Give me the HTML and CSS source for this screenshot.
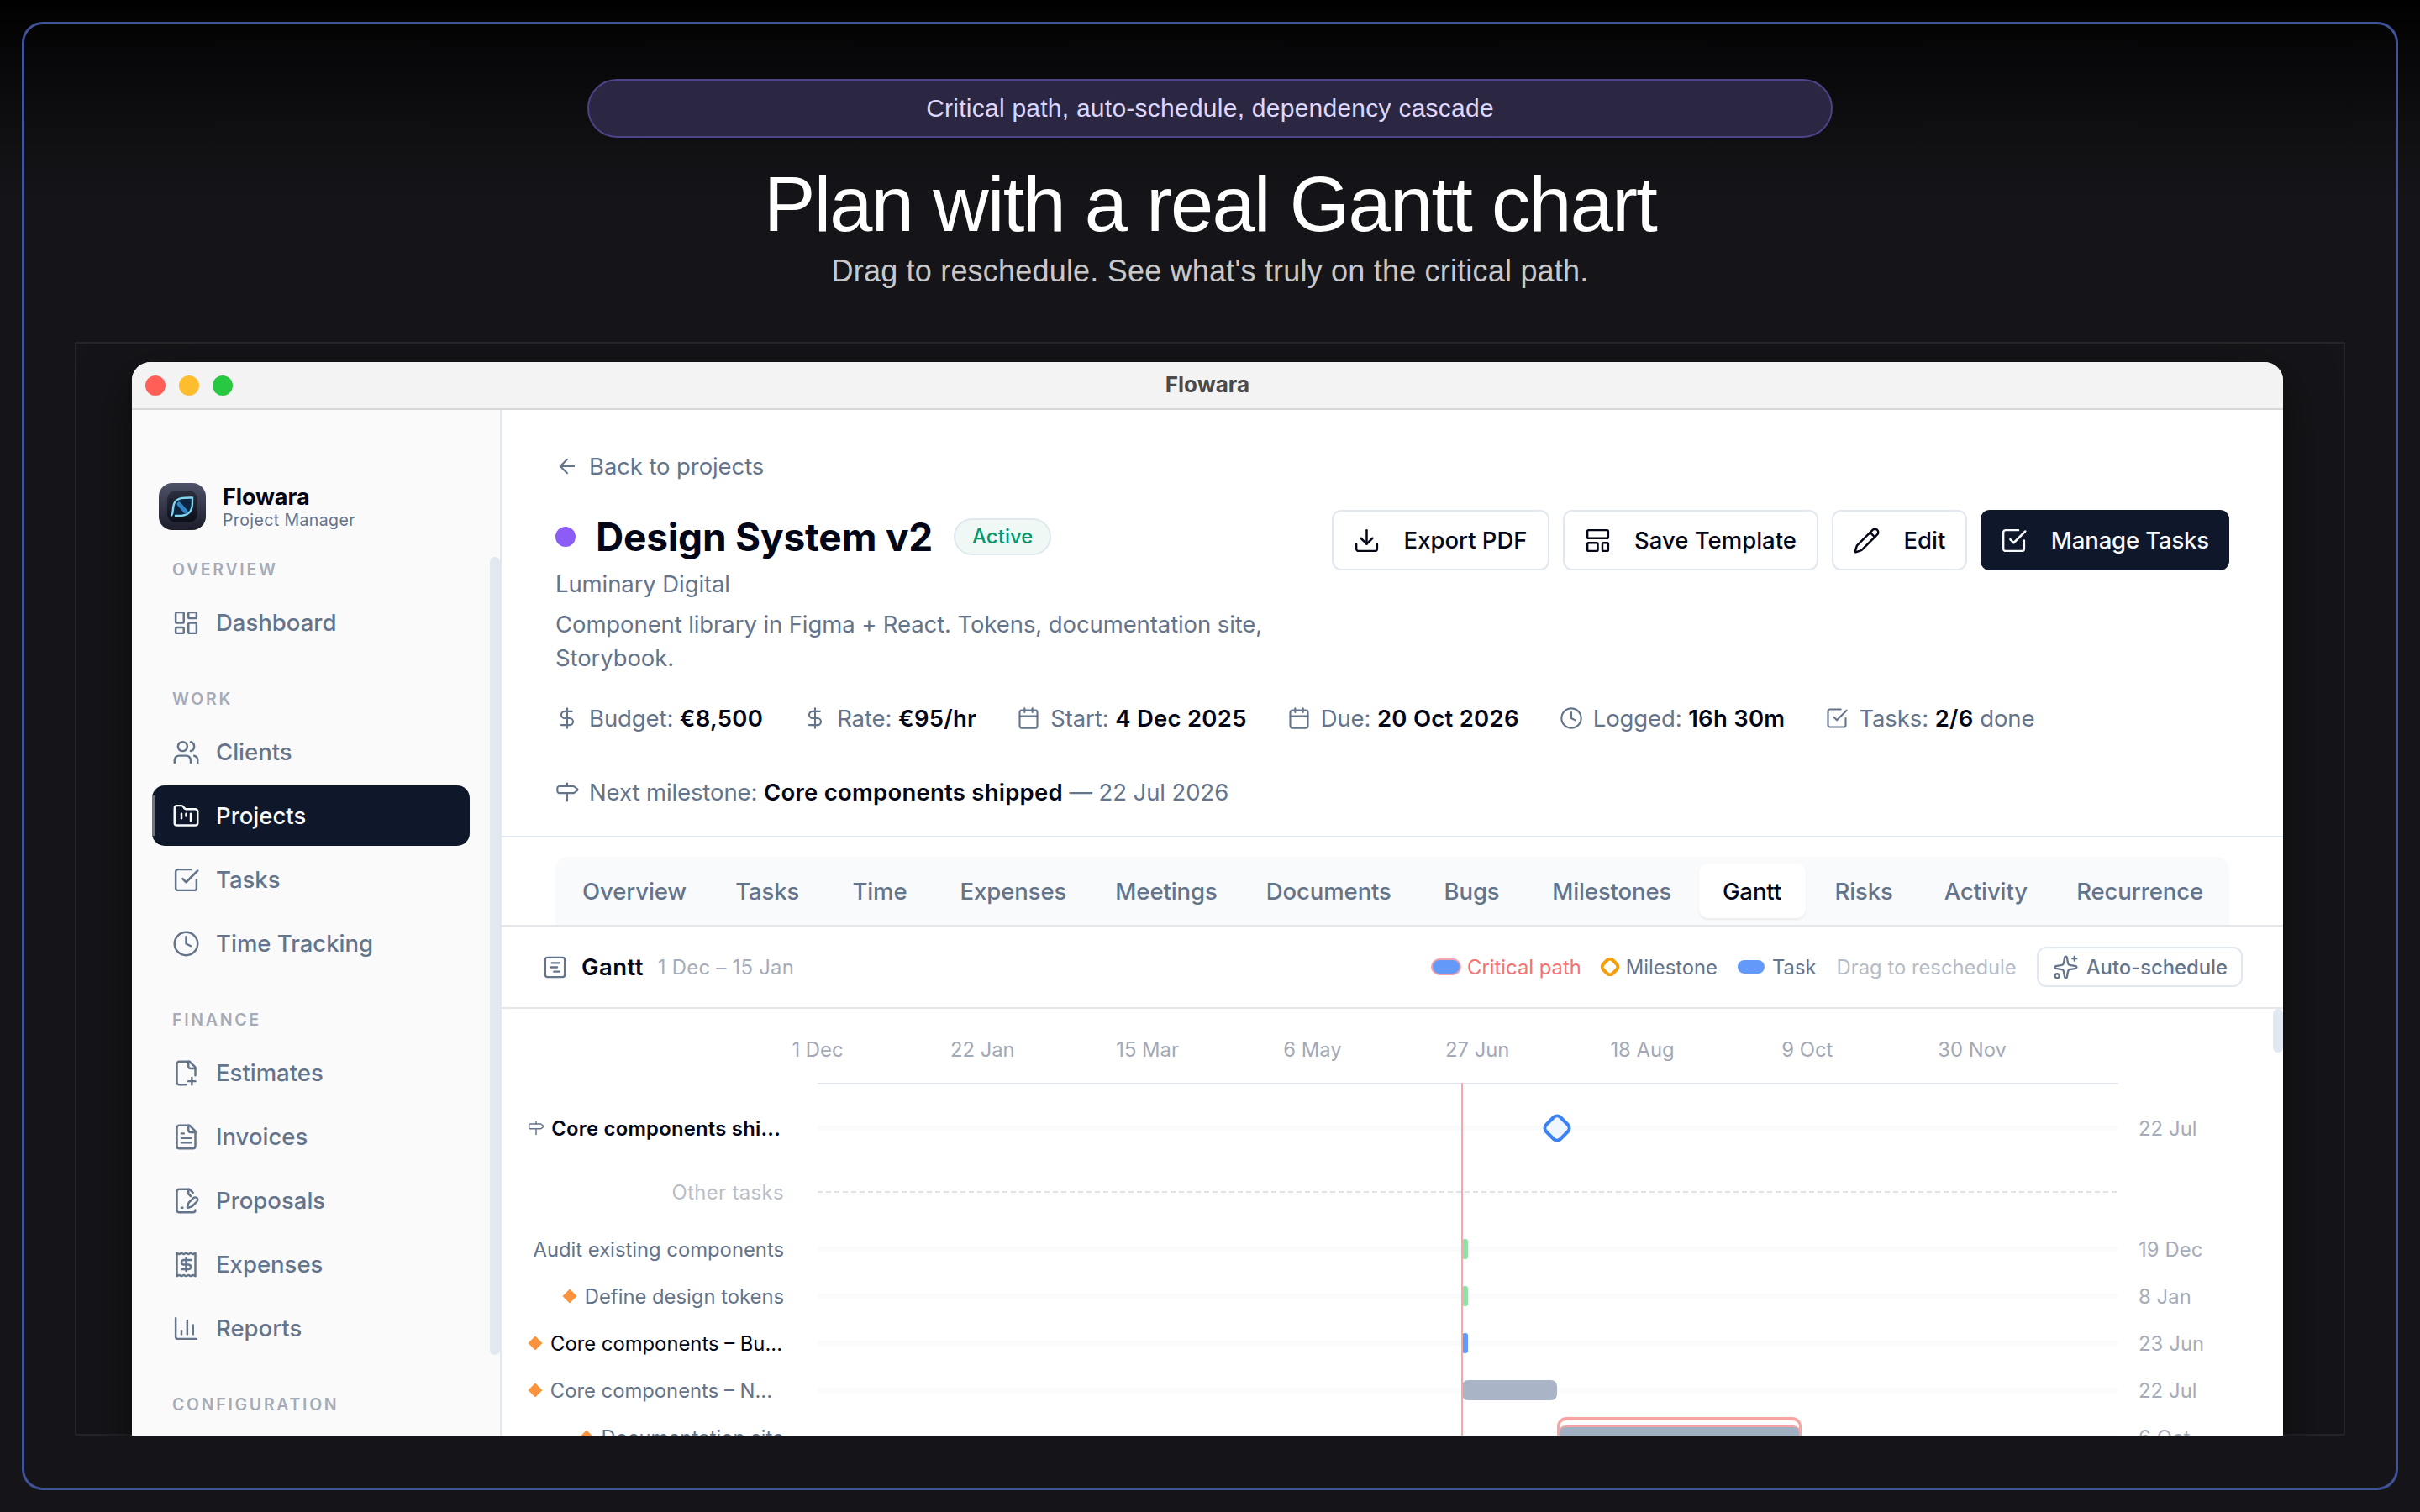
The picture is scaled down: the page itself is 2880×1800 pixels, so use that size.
FILE: index.html
```html
<!doctype html>
<html lang="en">
 <head>
  <meta charset="utf-8">
  <title>Flowara</title>
  <meta name="viewport" content="width=device-width, initial-scale=1">
  <link rel="stylesheet" href="styles.css">
 </head>
 <body>
  <svg class="sprite">
   <symbol id="i-dashboard" viewBox="0 0 24 24"><rect width="7" height="9" x="3" y="3" rx="1"/><rect width="7" height="5" x="14" y="3" rx="1"/><rect width="7" height="9" x="14" y="12" rx="1"/><rect width="7" height="5" x="3" y="16" rx="1"/></symbol>
   <symbol id="i-users" viewBox="0 0 24 24"><path d="M16 21v-2a4 4 0 0 0-4-4H6a4 4 0 0 0-4 4v2"/><circle cx="9" cy="7" r="4"/><path d="M22 21v-2a4 4 0 0 0-3-3.87"/><path d="M16 3.13a4 4 0 0 1 0 7.75"/></symbol>
   <symbol id="i-folder" viewBox="0 0 24 24"><path d="M4 20h16a2 2 0 0 0 2-2V8a2 2 0 0 0-2-2h-7.93a2 2 0 0 1-1.66-.9l-.82-1.2A2 2 0 0 0 7.93 3H4a2 2 0 0 0-2 2v13c0 1.1.9 2 2 2Z"/><path d="M8 10v4"/><path d="M12 10v2"/><path d="M16 10v6"/></symbol>
   <symbol id="i-check" viewBox="0 0 24 24"><path d="m9 11 3 3L22 4"/><path d="M21 12v7a2 2 0 0 1-2 2H5a2 2 0 0 1-2-2V5a2 2 0 0 1 2-2h11"/></symbol>
   <symbol id="i-clock" viewBox="0 0 24 24"><circle cx="12" cy="12" r="10"/><path d="M12 6v6l4 2"/></symbol>
   <symbol id="i-estimate" viewBox="0 0 24 24"><path d="M14 2v4a2 2 0 0 0 2 2h4"/><path d="M20 14V7l-5-5H6a2 2 0 0 0-2 2v16a2 2 0 0 0 2 2h6"/><path d="M14 19h6"/><path d="M17 16v6"/></symbol>
   <symbol id="i-invoice" viewBox="0 0 24 24"><path d="M15 2H6a2 2 0 0 0-2 2v16a2 2 0 0 0 2 2h12a2 2 0 0 0 2-2V7Z"/><path d="M14 2v4a2 2 0 0 0 2 2h4"/><path d="M10 9H8"/><path d="M16 13H8"/><path d="M16 17H8"/></symbol>
   <symbol id="i-proposal" viewBox="0 0 24 24"><path d="m18 5-2.414-2.414A2 2 0 0 0 14.172 2H6a2 2 0 0 0-2 2v16a2 2 0 0 0 2 2h12a2 2 0 0 0 2-2"/><path d="M21.378 12.626a1 1 0 0 0-3.004-3.004l-4.01 4.012a2 2 0 0 0-.506.854l-.837 2.87a.5.5 0 0 0 .62.62l2.87-.837a2 2 0 0 0 .854-.506z"/><path d="M14 2v4l2 2"/><path d="M8 18h1"/></symbol>
   <symbol id="i-receipt" viewBox="0 0 24 24"><path d="M4 2v20l2-1 2 1 2-1 2 1 2-1 2 1 2-1 2 1V2l-2 1-2-1-2 1-2-1-2 1-2-1-2 1Z"/><path d="M16 8h-6a2 2 0 1 0 0 4h4a2 2 0 1 1 0 4H8"/><path d="M12 17.5v-11"/></symbol>
   <symbol id="i-reports" viewBox="0 0 24 24"><path d="M3 3v16a2 2 0 0 0 2 2h16"/><path d="M18 17V9"/><path d="M13 17V5"/><path d="M8 17v-3"/></symbol>
   <symbol id="i-back" viewBox="0 0 24 24"><path d="m12 19-7-7 7-7"/><path d="M19 12H5"/></symbol>
   <symbol id="i-dollar" viewBox="0 0 24 24"><path d="M12 2v20"/><path d="M17 5H9.5a3.5 3.5 0 0 0 0 7h5a3.5 3.5 0 0 1 0 7H6"/></symbol>
   <symbol id="i-calendar" viewBox="0 0 24 24"><path d="M8 2v4"/><path d="M16 2v4"/><rect width="18" height="18" x="3" y="4" rx="2"/><path d="M3 10h18"/></symbol>
   <symbol id="i-signpost" viewBox="0 0 24 24"><path d="M12 13v8"/><path d="M12 3v3"/><path d="M18.2 6a2 2 0 0 1 1.4.6l2.7 2.2a1 1 0 0 1 0 1.4l-2.7 2.2a2 2 0 0 1-1.4.6H4a2 2 0 0 1-2-2V8a2 2 0 0 1 2-2z"/></symbol>
   <symbol id="i-download" viewBox="0 0 24 24"><path d="M21 15v4a2 2 0 0 1-2 2H5a2 2 0 0 1-2-2v-4"/><path d="m7 10 5 5 5-5"/><path d="M12 15V3"/></symbol>
   <symbol id="i-template" viewBox="0 0 24 24"><rect width="18" height="7" x="3" y="3" rx="1"/><rect width="9" height="7" x="3" y="14" rx="1"/><rect width="5" height="7" x="16" y="14" rx="1"/></symbol>
   <symbol id="i-pencil" viewBox="0 0 24 24"><path d="M21.174 6.812a1 1 0 0 0-3.986-3.987L3.842 16.174a2 2 0 0 0-.5.83l-1.321 4.352a.5.5 0 0 0 .623.622l4.353-1.32a2 2 0 0 0 .83-.497z"/><path d="m15 5 4 4"/></symbol>
   <symbol id="i-gantt" viewBox="0 0 24 24"><rect width="18" height="18" x="3" y="3" rx="2"/><path d="M9 8h7"/><path d="M8 12h6"/><path d="M11 16h5"/></symbol>
   <symbol id="i-sparkles" viewBox="0 0 24 24"><path d="M11.017 2.814a1 1 0 0 1 1.966 0l1.051 5.558a2 2 0 0 0 1.594 1.594l5.558 1.051a1 1 0 0 1 0 1.966l-5.558 1.051a2 2 0 0 0-1.594 1.594l-1.051 5.558a1 1 0 0 1-1.966 0l-1.051-5.558a2 2 0 0 0-1.594-1.594l-5.558-1.051a1 1 0 0 1 0-1.966l5.558-1.051a2 2 0 0 0 1.594-1.594z"/><path d="M20 2v4"/><path d="M22 4h-4"/><circle cx="4" cy="20" r="2"/></symbol>
  </svg>

  <main class="poster">
   <div class="pill">Critical path, auto-schedule, dependency cascade</div>
   <h1>Plan with a real Gantt chart</h1>
   <p class="tagline">Drag to reschedule. See what's truly on the critical path.</p>

   <div class="frame">
    <div class="window">
     <header class="titlebar">
      <div class="lights"><i class="red"></i><i class="yellow"></i><i class="green"></i></div>
      <span>Flowara</span>
     </header>
     <div class="app">
      <aside class="sidebar">
       <div class="brand">
        <svg class="logo" viewBox="0 0 56 56">
         <defs>
          <linearGradient id="tile" x1="0" y1="0" x2="0" y2="1"><stop offset="0" stop-color="#4d5268"/><stop offset="1" stop-color="#1c1d2b"/></linearGradient>
          <linearGradient id="inner" x1="0" y1="0" x2="0" y2="1"><stop offset="0" stop-color="#2b2f3f"/><stop offset="1" stop-color="#0c0e18"/></linearGradient>
         </defs>
         <rect width="56" height="56" rx="16" fill="url(#tile)"/>
         <rect x="10" y="9" width="36" height="38" rx="10" fill="url(#inner)"/>
         <path d="M15 38.500C18 36 15.500 29 19 23C23 17 31 17.500 40 17.500C40 25 40.500 31 36 35.500C32 39.500 26 39 20 39" fill="#0c2340" stroke="#7fd6ee" stroke-width="2.400" stroke-linecap="round" stroke-linejoin="round"/>
         <path d="M24 25l8 9" stroke="#2f86c4" stroke-width="5" stroke-linecap="round"/>
        </svg>
        <div class="brand-text"><strong>Flowara</strong><small>Project Manager</small></div>
       </div>
       <nav>
        <h6>Overview</h6>
        <a><svg><use href="#i-dashboard"/></svg>Dashboard</a>
        <h6>Work</h6>
        <a><svg><use href="#i-users"/></svg>Clients</a>
        <a class="active"><svg><use href="#i-folder"/></svg>Projects</a>
        <a><svg><use href="#i-check"/></svg>Tasks</a>
        <a><svg><use href="#i-clock"/></svg>Time Tracking</a>
        <h6>Finance</h6>
        <a><svg><use href="#i-estimate"/></svg>Estimates</a>
        <a><svg><use href="#i-invoice"/></svg>Invoices</a>
        <a><svg><use href="#i-proposal"/></svg>Proposals</a>
        <a><svg><use href="#i-receipt"/></svg>Expenses</a>
        <a><svg><use href="#i-reports"/></svg>Reports</a>
        <h6>Configuration</h6>
       </nav>
       <div class="scrollbar"></div>
      </aside>

      <section class="content">
       <div class="project">
        <a class="back"><svg><use href="#i-back"/></svg>Back to projects</a>
        <div class="project-head">
         <div class="project-info">
          <div class="title-row">
           <i class="dot"></i>
           <h2>Design System v2</h2>
           <span class="badge">Active</span>
          </div>
          <p class="client">Luminary Digital</p>
          <p class="desc">Component library in Figma + React. Tokens, documentation site, Storybook.</p>
         </div>
         <div class="actions">
          <button><svg><use href="#i-download"/></svg>Export PDF</button>
          <button><svg><use href="#i-template"/></svg>Save Template</button>
          <button><svg><use href="#i-pencil"/></svg>Edit</button>
          <button class="primary"><svg><use href="#i-check"/></svg>Manage Tasks</button>
         </div>
        </div>
        <div class="meta">
         <span><svg><use href="#i-dollar"/></svg>Budget: <b>€8,500</b></span>
         <span><svg><use href="#i-dollar"/></svg>Rate: <b>€95/hr</b></span>
         <span><svg><use href="#i-calendar"/></svg>Start: <b>4 Dec 2025</b></span>
         <span><svg><use href="#i-calendar"/></svg>Due: <b>20 Oct 2026</b></span>
         <span><svg><use href="#i-clock"/></svg>Logged: <b>16h 30m</b></span>
         <span><svg><use href="#i-check"/></svg>Tasks: <b>2/6</b> done</span>
         <span><svg><use href="#i-signpost"/></svg>Next milestone: <b>Core components shipped</b> — 22 Jul 2026</span>
        </div>
       </div>

       <div class="tabs-wrap">
        <div class="tabs">
         <a>Overview</a><a>Tasks</a><a>Time</a><a>Expenses</a><a>Meetings</a><a>Documents</a><a>Bugs</a><a>Milestones</a><a class="active">Gantt</a><a>Risks</a><a>Activity</a><a>Recurrence</a>
        </div>
       </div>

       <div class="toolbar">
        <svg><use href="#i-gantt"/></svg>
        <h3>Gantt</h3>
        <span class="range">1 Dec – 15 Jan</span>
        <div class="legend">
         <span class="critical"><i class="swatch"></i>Critical path</span>
         <span><i class="ring"></i>Milestone</span>
         <span><i class="swatch"></i>Task</span>
         <span class="hint">Drag to reschedule</span>
         <button><svg><use href="#i-sparkles"/></svg>Auto-schedule</button>
        </div>
       </div>

       <div class="gantt">
        <div class="axis">
         <span>1 Dec</span><span>22 Jan</span><span>15 Mar</span><span>6 May</span><span>27 Jun</span><span>18 Aug</span><span>9 Oct</span><span>30 Nov</span>
        </div>
        <div class="rows">
         <div class="row milestone">
          <div class="label"><svg><use href="#i-signpost"/></svg><b>Core components shi...</b></div>
          <div class="track"><i class="diamond" style="left: 56.85%"></i></div>
          <time>22 Jul</time>
         </div>
         <div class="row other">
          <div class="label">Other tasks</div>
          <div class="dashes"></div>
         </div>
         <div class="row">
          <div class="label">Audit existing components</div>
          <div class="track"><i class="bar done" style="left: 49.55%; width: 7px"></i></div>
          <time>19 Dec</time>
         </div>
         <div class="row">
          <div class="label"><i class="dep"></i>Define design tokens</div>
          <div class="track"><i class="bar done" style="left: 49.55%; width: 7px"></i></div>
          <time>8 Jan</time>
         </div>
         <div class="row current">
          <div class="label"><i class="dep"></i>Core components – Bu...</div>
          <div class="track"><i class="bar doing" style="left: 49.55%; width: 7px"></i></div>
          <time>23 Jun</time>
         </div>
         <div class="row">
          <div class="label cut"><i class="dep"></i>Core components – N...</div>
          <div class="track"><i class="bar" style="left: 49.55%; width: 7.3%"></i></div>
          <time>22 Jul</time>
         </div>
         <div class="row">
          <div class="label"><i class="dep"></i>Documentation site</div>
          <div class="track"><i class="bar late" style="left: 57.05%; width: 18.4%"></i></div>
          <time>6 Oct</time>
         </div>
         <div class="today"></div>
        </div>
        <div class="scrollbar"></div>
       </div>
      </section>
     </div>
    </div>
   </div>
  </main>
 </body>
</html>
```
FILE: styles.css
```css
* {
 box-sizing: border-box;
}
body {
 margin: 0;
 width: 2880px;
 height: 1800px;
 padding: 26px;
 overflow: hidden;
 background: linear-gradient(#010101 0, #08080a 75px, #0f0f12 150px, #151519 240px, #151519 100%);
 font-family: Inter, "Liberation Sans", sans-serif;
 font-size: 27.5px;
 color: #64748b;
}
h1, h2, h3, h6, p {
 margin: 0;
}
svg {
 fill: none;
 stroke: currentColor;
 stroke-width: 1.8;
 stroke-linecap: round;
 stroke-linejoin: round;
 flex: none;
}
i {
 display: block;
 flex: none;
}
.sprite {
 display: none;
}

/* poster */
.poster {
 height: 1748px;
 border: 3px solid #41529a;
 border-radius: 25px;
 padding: 65px 60px 0;
 display: flex;
 flex-direction: column;
 align-items: center;
}
.pill {
 width: 1482px;
 height: 70px;
 border: 2px solid #4c4488;
 border-radius: 35px;
 background: #2b2743;
 color: #ddd6fe;
 font: 30px/66px "Liberation Sans", sans-serif;
 letter-spacing: 0.25px;
 text-align: center;
}
h1 {
 margin-top: 24px;
 font: 92px/110px "Liberation Sans", sans-serif;
 letter-spacing: -1.7px;
 color: #fff;
}
.tagline {
 margin-top: 1px;
 font: 36px/48px "Liberation Sans", sans-serif;
 letter-spacing: 0.2px;
 color: #c8c8ca;
}
.frame {
 margin-top: 60px;
 width: 2702px;
 height: 1302px;
 border: 2px solid #242429;
 border-bottom: none;
 box-shadow: inset 0 -2px #242429;
 padding: 22px 66px 0;
 overflow: hidden;
}
.window {
 width: 2560px;
 height: 1400px;
 border-radius: 22px 22px 0 0;
 background: #fff;
 overflow: hidden;
 box-shadow: 0 20px 60px rgba(0, 0, 0, 0.5);
}
.titlebar {
 position: relative;
 height: 57px;
 padding-bottom: 2px;
 border-bottom: 2px solid #d6d6d8;
 background: #f3f3f3;
 display: flex;
 align-items: center;
 justify-content: center;
 font-size: 26px;
 font-weight: 700;
 color: #4a4a4a;
}
.lights {
 position: absolute;
 left: 16px;
 top: 16px;
 display: flex;
 gap: 16px;
}
.lights i {
 width: 24px;
 height: 24px;
 border-radius: 50%;
}
.red { background: #ff5f57; }
.yellow { background: #febc2e; }
.green { background: #28c840; }
.app {
 display: flex;
 height: 1343px;
}

/* sidebar */
.sidebar {
 position: relative;
 width: 440px;
 flex: none;
 padding: 87px 36px 0 24px;
 background: #fafafa;
 border-right: 2px solid #e2e8f0;
}
.brand {
 display: flex;
 gap: 20px;
 padding-left: 8px;
 height: 56px;
}
.logo {
 width: 56px;
 height: 56px;
 stroke: none;
}
.brand-text {
 display: flex;
 flex-direction: column;
 padding-top: 1px;
}
.brand strong {
 font-size: 27px;
 line-height: 32px;
 color: #020617;
 letter-spacing: -0.1px;
}
.brand small {
 font-size: 19.5px;
 line-height: 22px;
 letter-spacing: 0.4px;
}
h6 {
 margin: 41px 0 13px 24px;
 font-size: 19.5px;
 font-weight: 600;
 line-height: 28px;
 letter-spacing: 2.7px;
 text-transform: uppercase;
 color: #a5acb8;
}
.brand + nav h6:first-child {
 margin-top: 33px;
}
nav a {
 position: relative;
 height: 72px;
 padding-left: 24px;
 border-radius: 15px;
 display: flex;
 align-items: center;
 gap: 19px;
 font-weight: 500;
}
nav a + a {
 margin-top: 4px;
}
nav svg {
 width: 33px;
 height: 33px;
}
nav .active {
 background: #0f172a;
 color: #f8fafc;
}
nav .active:before {
 content: '';
 position: absolute;
 left: 0;
 top: 12px;
 width: 4px;
 height: 48px;
 background: #6f7480;
}
.scrollbar {
 position: absolute;
 right: 0;
 top: 175px;
 width: 12px;
 height: 950px;
 border-radius: 6px;
 background: #e2e8f0;
}

/* project header */
.content {
 flex: 1;
 min-width: 0;
}
.project {
 height: 509px;
 padding: 47px 64px 0;
 border-bottom: 2px solid #e2e8f0;
 letter-spacing: -0.1px;
}
.back, .meta span {
 display: flex;
 align-items: center;
 height: 40px;
}
.back svg, .meta svg {
 width: 28px;
 height: 28px;
 margin-right: 12px;
}
.project-head {
 display: flex;
 justify-content: space-between;
 margin-top: 32px;
}
.project-info {
 width: 880px;
}
.title-row {
 display: flex;
 align-items: center;
 height: 64px;
}
.dot {
 width: 24px;
 height: 24px;
 border-radius: 50%;
 background: #8b5cf6;
}
h2 {
 margin: 0 25px 0 24px;
 font-size: 46px;
 letter-spacing: -0.2px;
 color: #020617;
}
.badge {
 height: 44px;
 padding: 0 20px;
 border: 2px solid #dfe8ee;
 border-radius: 22px;
 background: #eff8f4;
 color: #059669;
 font-size: 23.8px;
 font-weight: 500;
 letter-spacing: 0.1px;
 line-height: 40px;
}
.client, .desc {
 line-height: 40px;
}
.client {
 margin-top: 4px;
}
.desc {
 margin-top: 8px;
}
.actions {
 display: flex;
 gap: 16px;
}
button {
 height: 72px;
 padding: 0 24px 0 23px;
 border: 2px solid #e2e8f0;
 border-radius: 11px;
 background: #fff;
 color: #020617;
 font: 500 27.5px Inter, sans-serif;
 display: flex;
 align-items: center;
 gap: 27.5px;
}
.actions svg {
 width: 33px;
 height: 33px;
}
.primary {
 border: none;
 background: #0f172a;
 color: #f8fafc;
 letter-spacing: -0.15px;
}
.meta {
 display: flex;
 flex-wrap: wrap;
 gap: 48px;
 margin-top: 32px;
}
.meta span {
 white-space: pre;
}
b {
 font-weight: 600;
 letter-spacing: 0.25px;
 color: #020617;
}

/* tabs */
.tabs-wrap {
 height: 106px;
 padding: 23px 64px 0;
 border-bottom: 2px solid #e5e7eb;
}
.tabs {
 height: 81px;
 padding: 8px 5px 8px 6px;
 background: #f8fafb;
 border-radius: 15px 15px 0 0;
 display: flex;
 justify-content: space-between;
}
.tabs a {
 min-width: 127px;
 height: 65px;
 padding: 0 26px;
 border-radius: 11px;
 font-weight: 500;
 letter-spacing: -0.1px;
 line-height: 67px;
 text-align: center;
}
.tabs .active {
 background: #fff;
 color: #020617;
 box-shadow: 0 2px 3px rgba(0, 0, 0, 0.06);
}

/* gantt */
.toolbar {
 height: 98px;
 padding: 0 48px 0 48px;
 border-bottom: 2px solid #e5e7eb;
 display: flex;
 align-items: center;
 font-size: 23.8px;
}
.toolbar > svg {
 width: 31px;
 height: 31px;
}
h3 {
 margin: 0 17px 0 16px;
 font-size: 27.5px;
 font-weight: 600;
 letter-spacing: 0.4px;
 color: #020617;
}
.range {
 letter-spacing: 0.3px;
 color: #a5adba;
}
.legend {
 margin-left: auto;
 display: flex;
 align-items: center;
 gap: 24px;
}
.legend span {
 display: flex;
 align-items: center;
 gap: 9px;
}
.swatch {
 width: 32px;
 height: 16px;
 border-radius: 8px;
 background: #6399f8;
}
.critical {
 color: #f87171;
}
.critical .swatch {
 box-shadow: 0 0 0 2px #f5a3a8;
}
.ring {
 width: 20px;
 height: 20px;
 border: 4px solid #f59e0b;
 border-radius: 7px;
 transform: rotate(45deg);
}
.legend .hint {
 color: #b6bcc7;
}
.legend button {
 height: 48px;
 padding: 0 16px 0 17px;
 gap: 9px;
 color: #64748b;
 font-size: 23.8px;
}
.legend button svg {
 width: 31px;
 height: 31px;
}
.gantt {
 position: relative;
 padding-left: 30px;
}
.gantt .scrollbar {
 top: 0;
 height: 52px;
}
.axis {
 width: 1548px;
 height: 90px;
 margin-left: 346px;
 border-bottom: 2px solid #e2e5ec;
 display: flex;
 font-size: 23.8px;
 line-height: 98px;
 color: #a3a9b5;
}
.axis span {
 width: 196.3px;
 flex: none;
 text-align: center;
 transform: translateX(-50%);
}
.rows {
 position: relative;
 font-size: 23.8px;
}
.row {
 display: flex;
 align-items: center;
 height: 56px;
}
.label {
 width: 306px;
 margin-right: 40px;
 display: flex;
 align-items: center;
 justify-content: flex-end;
 white-space: nowrap;
}
.label svg {
 width: 20px;
 height: 20px;
 margin-right: 8px;
}
.current .label {
 padding-right: 2px;
 color: #020617;
}
.cut {
 padding-right: 14px;
}
.track {
 position: relative;
 width: 1548px;
 height: 6px;
 background: #fafbfc;
}
.row time {
 margin-left: 24px;
 letter-spacing: 0.1px;
 color: #a7adb8;
}
.milestone {
 height: 104px;
}
.milestone .label {
 padding-right: 4px;
}
.other {
 height: 48px;
 margin-bottom: 16px;
 letter-spacing: 0.4px;
 color: #b9bec7;
}
.dashes {
 width: 1548px;
 height: 2px;
 background: repeating-linear-gradient(90deg, #dfe2e8 0 6px, transparent 6px 10px);
}
.dep {
 width: 12px;
 height: 12px;
 margin-right: 12px;
 background: #fb923c;
 transform: rotate(45deg);
}
.diamond {
 position: absolute;
 top: -11px;
 width: 28px;
 height: 28px;
 margin-left: -14px;
 border: 4px solid #3b82f6;
 border-radius: 8px;
 background: #eff6ff;
 transform: rotate(45deg);
}
.bar {
 position: absolute;
 top: -9px;
 height: 24px;
 border-radius: 7px;
 background: #a9b5c7;
}
.done, .doing {
 border-radius: 3px;
}
.done { background: #92dfa8; }
.doing { background: #6399f8; }
.late {
 background: #a0b0c3;
 box-shadow: 0 0 0 2px #f1a3a6;
}
/* critical path outline */
.late:before {
 content: '';
 position: absolute;
 inset: -12px -3px;
 border: 4px solid #f8a4a4;
 border-width: 4px 3px;
 border-radius: 11px;
}
.today {
 position: absolute;
 left: 1112px;
 top: -2px;
 width: 2px;
 height: 460px;
 background: #f3a9a5;
}
```
